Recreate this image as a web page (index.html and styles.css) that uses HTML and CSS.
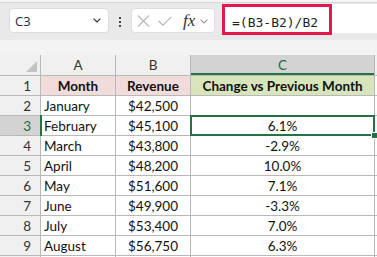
FILE: index.html
```html
<!DOCTYPE html>
<html>
<head>
	<meta charset="utf-8">
	<title>Change vs Previous Month</title>
	<link rel="stylesheet" href="styles.css">
</head>
<body>

	<div class="formula-bar">

		<div class="name-box">
			<span class="name-box-ref">C3</span>
			<svg class="name-box-arrow" width="8" height="5" viewBox="0 0 8 5"><path d="M0.6 0.6 L4 4 L7.4 0.6" fill="none" stroke="#333" stroke-width="1.2"/></svg>
		</div>

		<div class="formula-bar-grip"><i></i><i></i><i></i></div>

		<div class="formula-bar-buttons">
			<svg class="btn-cancel" width="13" height="12" viewBox="0 0 13 12"><path d="M1 0.5 L12 11.5 M12 0.5 L1 11.5" fill="none" stroke="#b9b9b9" stroke-width="1.2"/></svg>
			<svg class="btn-enter" width="14" height="10" viewBox="0 0 14 10"><path d="M0.5 4.8 L5 9.2 L13.5 0.6" fill="none" stroke="#b9b9b9" stroke-width="1.2"/></svg>
			<span class="btn-fx">fx</span>
			<svg class="btn-more" width="8" height="5" viewBox="0 0 8 5"><path d="M0.6 0.6 L4 4 L7.4 0.6" fill="none" stroke="#9a9a9a" stroke-width="1.1"/></svg>
		</div>

		<div class="formula-bar-input">
			<span class="formula-text">=(B3-B2)/B2</span>
			<div class="formula-highlight"></div>
		</div>
	</div>

	<div class="sheet-gap"></div>

	<div class="sheet">
		<!-- header row -->
		<div class="corner"></div>
		<div class="col-head">A</div>
		<div class="col-head">B</div>
		<div class="col-head col-head-active">C</div>
		<div class="col-head"></div>

		<div class="row-head">1</div>
		<div class="cell cell-title cell-pink">Month</div>
		<div class="cell cell-title cell-pink">Revenue</div>
		<div class="cell cell-title cell-olive">Change vs Previous Month</div>
		<div class="cell"></div>

		<div class="row-head">2</div>
		<div class="cell">January</div>
		<div class="cell cell-num">$42,500</div>
		<div class="cell cell-num"></div>
		<div class="cell"></div>

		<div class="row-head row-head-active">3</div>
		<div class="cell">February</div>
		<div class="cell cell-num">$45,100</div>
		<div class="cell cell-num cell-active">6.1%</div>
		<div class="cell"></div>

		<div class="row-head">4</div>
		<div class="cell">March</div>
		<div class="cell cell-num">$43,800</div>
		<div class="cell cell-num">-2.9%</div>
		<div class="cell"></div>

		<div class="row-head">5</div>
		<div class="cell">April</div>
		<div class="cell cell-num">$48,200</div>
		<div class="cell cell-num">10.0%</div>
		<div class="cell"></div>

		<div class="row-head">6</div>
		<div class="cell">May</div>
		<div class="cell cell-num">$51,600</div>
		<div class="cell cell-num">7.1%</div>
		<div class="cell"></div>

		<div class="row-head">7</div>
		<div class="cell">June</div>
		<div class="cell cell-num">$49,900</div>
		<div class="cell cell-num">-3.3%</div>
		<div class="cell"></div>

		<div class="row-head">8</div>
		<div class="cell">July</div>
		<div class="cell cell-num">$53,400</div>
		<div class="cell cell-num">7.0%</div>
		<div class="cell"></div>

		<div class="row-head">9</div>
		<div class="cell">August</div>
		<div class="cell cell-num">$56,750</div>
		<div class="cell cell-num">6.3%</div>
		<div class="cell"></div>

		<!-- next row, only its top edge is in view -->
		<div class="row-head"></div>
		<div class="cell"></div>
		<div class="cell"></div>
		<div class="cell"></div>
		<div class="cell"></div>
	</div>

</body>
</html>
```

FILE: styles.css
```css
body {
	margin: 0;
	padding: 0;
	width: 377px;
	height: 257px;
	overflow: hidden;
	background: #f3f3f3;
	font-family: Lato, "Liberation Sans", sans-serif;
	font-size: 13.5px;
	color: #111;
}

/* formula bar */

.formula-bar {
	height: 40px;
	box-sizing: border-box;
	display: flex;
	align-items: flex-start;
	padding-left: 9px;
	background: #e9e9e9;
	border-top: 2px solid #f5f5f5;
	box-shadow: inset 0 1px 0 #d8d8d8;
}

.name-box {
	width: 100px;
	height: 25px;
	margin-top: 6px;
	box-sizing: border-box;
	display: flex;
	align-items: center;
	justify-content: space-between;
	padding: 0 7px 0 5px;
	background: #fff;
	border: 1px solid #dcdcdc;
	border-radius: 4px;
}

.name-box-ref {
	font-family: "Open Sans", "Liberation Sans", sans-serif;
	font-size: 13px;
	color: #1d2a44;
}

.formula-bar-grip {
	display: flex;
	flex-direction: column;
	gap: 2px;
	margin: 15px 0 0 10px;
}

.formula-bar-grip i {
	display: block;
	width: 2px;
	height: 2px;
	background: #444;
}

.formula-bar-buttons {
	width: 84px;
	height: 25px;
	margin: 6px 0 0 10px;
	box-sizing: border-box;
	display: flex;
	align-items: center;
	padding-left: 5px;
	background: #fff;
	border: 1px solid #dedede;
	border-radius: 4px;
}

.btn-enter {
	margin-left: 8px;
}

.btn-fx {
	margin-left: 11px;
	font-family: "Liberation Serif", serif;
	font-style: italic;
	font-size: 17px;
	line-height: 17px;
	color: #333;
}

.btn-more {
	margin-left: 5px;
	margin-top: 1px;
}

.formula-bar-input {
	flex: 1;
	height: 29px;
	margin: 2px 0 0 7px;
	position: relative;
	box-sizing: border-box;
	padding: 10px 0 0 10px;
	background: #fff;
}

.formula-text {
	font-family: "DejaVu Sans Mono", "Liberation Mono", monospace;
	font-size: 13px;
	line-height: 15px;
	color: #1f1f1f;
}

.formula-highlight {
	position: absolute;
	left: 0;
	top: 0;
	width: 110px;
	height: 31px;
	box-sizing: border-box;
	border: 3px solid #e5174f;
}

.sheet-gap {
	height: 15px;
}

/* grid */

.sheet {
	display: grid;
	grid-template-columns: 40px 74px 74px 183px 60px;
	grid-template-rows: 20px;
	grid-auto-rows: 19px;
	gap: 1px;
	width: max-content;
	background: #b8b8b8;
}

.sheet > div {
	box-sizing: border-box;
	padding-top: 3px;
	line-height: 15px;
	white-space: nowrap;
	overflow: hidden;
}

.corner {
	position: relative;
	background: #f0f0f0;
}

.corner:after {
	content: "";
	position: absolute;
	right: 3px;
	bottom: 3px;
	width: 0;
	height: 0;
	border-left: 11px solid transparent;
	border-bottom: 11px solid #c3c3c3;
}

.col-head {
	background: #f0f0f0;
	text-align: center;
	color: #333;
}

.col-head-active {
	background: #d3d3d3;
	color: #1e6b3f;
	box-shadow: inset 0 -2px 0 #217346;
}

.row-head {
	background: #f0f0f0;
	text-align: right;
	padding-right: 9px;
	color: #333;
}

.sheet > .row-head-active {
	position: relative;
	overflow: visible;
	background: #d3d3d3;
	color: #1e6b3f;
}

.row-head-active:after {
	content: "";
	position: absolute;
	top: -1px;
	bottom: -1px;
	right: -2px;
	width: 2px;
	background: #217346;
}

.cell {
	background: #fff;
	padding-left: 3px;
	padding-right: 3px;
}

.cell-num {
	text-align: center;
}

.cell-title {
	font-weight: 700;
	text-align: center;
}

.cell-pink {
	background: #f2dcdb;
}

.cell-olive {
	background: #d8e4bc;
}

.sheet > .cell-active {
	position: relative;
	overflow: visible;
	outline: 2px solid #217346;
	outline-offset: -1px;
}

.cell-active:after {
	content: "";
	position: absolute;
	right: -4px;
	bottom: -4px;
	width: 7px;
	height: 7px;
	box-sizing: border-box;
	background: #217346;
	border: 1px solid #fff;
}
```
